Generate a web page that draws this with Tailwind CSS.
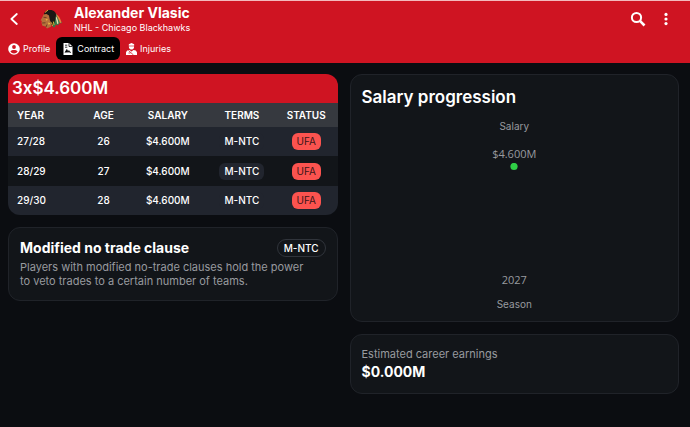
<!DOCTYPE html>
<html lang="en">
<head>
<meta charset="utf-8">
<meta name="viewport" content="width=device-width, initial-scale=1">
<title>Alexander Vlasic – Contract</title>
<script src="https://cdn.jsdelivr.net/npm/@tailwindcss/browser@4"></script>
</head>
<body class="min-h-screen bg-[#0b0d11] font-['Inter',sans-serif] text-white">
<header class="border-t border-[#f3b9bd] bg-[#cf1422] pb-[3px]">
  <div class="flex h-9 items-center pr-4 pl-2">
    <button type="button" aria-label="Back" class="flex size-3 items-center justify-center">
      <svg class="h-3 w-2" viewBox="0 0 8 12" fill="none" stroke="currentColor" stroke-width="1.8" stroke-linecap="round" stroke-linejoin="round"><path d="M6.800 1 1.400 6l5.400 5"/></svg>
    </button>
    <svg class="ml-5 h-5 w-[22px]" viewBox="0 0 22 20" role="img" aria-label="Chicago Blackhawks">
      <path d="M13 4.500 16.500 5l2 3 3.500 6-3 .5-1 2-2-1-1.500 3-2-1z" fill="#35794a"/>
      <path d="M16 5.500c2.500.5 4.500 4 5.500 8l-1.500.5c-1-3-2.500-6-4-8.500z" fill="#e9823a"/>
      <path d="M14.500 5.500c2 1.500 3.500 5 4 9l-1.300.5c-.7-4-1.700-7-2.700-9.500z" fill="#e6dcb0"/>
      <path d="M4 6C4 2.500 7 .8 10 1c4 0 6.500 2.500 6 6l-1 5-2 4.500-3-1-1-7-3-3z" fill="#1b1714"/>
      <path d="M3.500 5.500 2.500 8 .6 11.200l1.200.8-.3 1.800.9 3 3.100.7L7 19.500l3.800-1.800.5-3.700-1.500-3L9 6.500 6.500 5z" fill="#b5703c"/>
      <path d="m3.500 8.300 3 .2M2.200 14l3.300-.2M7 15.500 6 18" stroke="#5c301c" stroke-width=".8" fill="none"/>
      <path d="m5.500 10 2.500.6-1.500 1.200zM8 13.500l2.200.8-1.400 1.700z" fill="#efc044"/>
      <path d="M5 3.500 8 1M11.500 13.500l1 3.500M13.300 12.500l.7 3.500" stroke="#e9b838" stroke-width=".9" fill="none"/>
    </svg>
    <div class="ml-3 flex-1">
      <h1 class="text-[14px] leading-[18px] font-bold">Alexander Vlasic</h1>
      <p class="text-[9px] leading-[12px]">NHL - Chicago Blackhawks</p>
    </div>
    <button type="button" aria-label="Search" class="flex size-4 items-center justify-center">
      <svg class="size-4" viewBox="0 0 16 16" fill="none" stroke="currentColor"><circle cx="6.500" cy="6.500" r="4.600" stroke-width="2"/><path d="m10.200 10.200 4.300 4.300" stroke-width="2.600"/></svg>
    </button>
    <button type="button" aria-label="More options" class="ml-3 flex size-4 items-center justify-center">
      <svg class="size-4" viewBox="0 0 16 16" fill="currentColor"><circle cx="8" cy="3.400" r="1.600"/><circle cx="8" cy="8" r="1.600"/><circle cx="8" cy="12.600" r="1.600"/></svg>
    </button>
  </div>
  <nav class="flex text-[9px] leading-[12px]">
    <a href="#profile" class="flex h-[23px] items-center gap-[3px] rounded-md pr-[6px] pl-2">
      <svg class="size-3" viewBox="0 0 12 12"><circle cx="6" cy="6" r="5.800" fill="#fff"/><circle cx="6" cy="4" r="1.900" fill="#cf1422"/><path d="M2.400 8.600C3.200 7.400 4.600 7 6 7s2.800.4 3.600 1.600C8.800 9.800 7.500 10.500 6 10.500S3.200 9.800 2.400 8.600z" fill="#cf1422"/></svg>
      Profile
    </a>
    <a href="#contract" aria-current="page" class="flex h-[23px] items-center gap-[3px] rounded-md bg-black px-[6px]">
      <svg class="size-3" viewBox="0 0 11 12"><path d="M1 0h5.500L10 3.500V12H1z" fill="#fff"/><path d="M6.500 0v3.500H10" fill="none" stroke="#000" stroke-width=".8"/><path d="M2.500 2.200h2.300M2.500 4.200h2.300" stroke="#000" stroke-width=".8"/><path d="m2.500 9.500 1.800-3 1.200 2.400.9-1.300.9 1.700h1.200" fill="#000" stroke="#000" stroke-width=".8"/></svg>
      Contract
    </a>
    <a href="#injuries" class="flex h-[23px] items-center gap-[3px] rounded-md px-[6px]">
      <svg class="h-3 w-[11px]" viewBox="0 0 11 12"><path d="M2.800 1.200 5.500 0l2.700 1.200L8 4.500C7.600 6 6.600 6.500 5.500 6.500S3.400 6 3 4.500z" fill="#fff"/><path d="M3 3h5" stroke="#cf1422" stroke-width=".7"/><path d="M0 12V9.500C.3 7.800 2 7 3.500 7l2 1.500 2-1.500c1.500 0 3.200.8 3.500 2.500V12z" fill="#fff"/><path d="m2.500 7.500 5 4.500M2.500 10h2" stroke="#cf1422" stroke-width=".8"/></svg>
      Injuries
    </a>
  </nav>
</header>
<main class="grid grid-cols-2 items-start gap-3 pt-[11px] pr-[11px] pb-4 pl-2">
  <div class="grid gap-3">
    <section class="overflow-hidden rounded-xl">
      <h2 class="bg-[#cf1422] px-1 text-[17px] leading-[29px] font-semibold">3x$4.600M</h2>
      <table class="w-full table-fixed text-center text-[10px] leading-[17px] font-medium">
        <colgroup><col class="w-[22%]"><col class="w-[14%]"><col class="w-[25%]"><col class="w-[20%]"><col class="w-[19%]"></colgroup>
        <thead class="bg-[#36393f]">
          <tr class="h-6"><th scope="col" class="pl-[9px] text-left font-semibold">YEAR</th><th scope="col" class="font-semibold">AGE</th><th scope="col" class="font-semibold">SALARY</th><th scope="col" class="font-semibold">TERMS</th><th scope="col" class="font-semibold">STATUS</th></tr>
        </thead>
        <tbody>
          <tr class="h-[29px] bg-[#21252e]"><td class="pl-[9px] text-left">27/28</td><td>26</td><td>$4.600M</td><td><span class="inline-block rounded-md bg-[#21252e] px-[5px]">M-NTC</span></td><td><span class="inline-block rounded-md bg-[#fb534f] px-[5px] font-normal text-[#3a1518]">UFA</span></td></tr>
          <tr class="h-[30px] bg-[#121519]"><td class="pl-[9px] text-left">28/29</td><td>27</td><td>$4.600M</td><td><span class="inline-block rounded-md bg-[#21252e] px-[5px]">M-NTC</span></td><td><span class="inline-block rounded-md bg-[#fb534f] px-[5px] font-normal text-[#3a1518]">UFA</span></td></tr>
          <tr class="h-[29px] bg-[#21252e]"><td class="pl-[9px] text-left">29/30</td><td>28</td><td>$4.600M</td><td><span class="inline-block rounded-md bg-[#21252e] px-[5px]">M-NTC</span></td><td><span class="inline-block rounded-md bg-[#fb534f] px-[5px] font-normal text-[#3a1518]">UFA</span></td></tr>
        </tbody>
      </table>
    </section>
    <section class="rounded-xl border border-[#202329] bg-[#121519] px-[11px] pt-[11px] pb-3">
      <div class="flex items-center justify-between">
        <h2 class="text-[14px] leading-[18px] font-bold">Modified no trade clause</h2>
        <span class="rounded-full border border-[#30343b] px-[6px] text-[10px] leading-[16px] font-medium">M-NTC</span>
      </div>
      <p class="mt-[3px] pr-4 text-[11px] leading-[14px] text-[#989a9f]">Players with modified no-trade clauses hold the power to veto trades to a certain number of teams.</p>
    </section>
  </div>
  <div class="grid gap-3">
    <section class="rounded-xl border border-[#202329] bg-[#121519] p-[11px]">
      <h2 class="text-[17px] leading-[22px] font-semibold">Salary progression</h2>
      <figure class="mt-3 flex flex-col items-center text-[#989a9f]">
        <div class="text-[10px] leading-[12px]">Salary</div>
        <div class="mt-[15px] font-['Open_Sans',sans-serif] text-[11px] leading-[14px]">$4.600M</div>
        <svg class="mt-[2px] h-[110px] w-2" viewBox="0 0 8 110" role="img" aria-label="2027: $4.600M"><circle cx="4" cy="3.500" r="3.600" fill="#2fce46"/></svg>
        <div class="font-['Open_Sans',sans-serif] text-[11px] leading-[14px]">2027</div>
        <figcaption class="mt-[11px] text-[10px] leading-[12px]">Season</figcaption>
      </figure>
    </section>
    <section class="rounded-xl border border-[#202329] bg-[#121519] p-[11px]">
      <h2 class="text-[11px] leading-[16px] text-[#989a9f]">Estimated career earnings</h2>
      <p class="text-[14px] leading-[20px] font-bold">$0.000M</p>
    </section>
  </div>
</main>
</body>
</html>
